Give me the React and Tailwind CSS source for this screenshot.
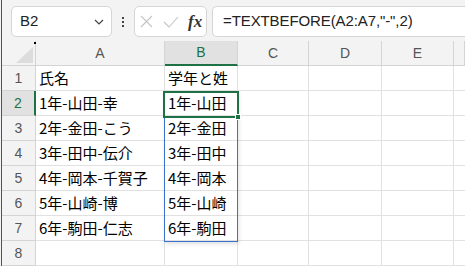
import React from "react";

const cols = ["A", "B", "C", "D", "E", ""];
const rows = [
  ["氏名", "学年と姓"],
  ["1年-山田-幸", "1年-山田"],
  ["2年-金田-こう", "2年-金田"],
  ["3年-田中-伝介", "3年-田中"],
  ["4年-岡本-千賀子", "4年-岡本"],
  ["5年-山崎-博", "5年-山崎"],
  ["6年-駒田-仁志", "6年-駒田"],
  ["", ""],
];

const jp = { fontFamily: '"Noto Sans CJK JP", "Noto Sans", sans-serif' };

function Toolbar() {
  return (
    <div className="h-[42px] flex items-start pt-[6px] bg-[#f3f3f3]">
      {/* name box */}
      <div className="ml-[9px] w-[101px] h-[31px] bg-white border border-[#d6d6d6] rounded-[5px] flex items-center pl-[8px] pr-[6px]">
        <span className="flex-1 text-[15px] text-[#222] font-['Liberation_Sans',sans-serif]">B2</span>
        <svg width="10" height="6" viewBox="0 0 10 6" className="mr-[1px]">
          <path d="M1 1 L5 5 L9 1" fill="none" stroke="#444" strokeWidth="1.2" />
        </svg>
      </div>
      {/* dots */}
      <div className="w-[22px] h-[31px] flex flex-col items-center justify-center gap-[2px]">
        <span className="w-[2px] h-[2px] bg-[#444]" />
        <span className="w-[2px] h-[2px] bg-[#444]" />
        <span className="w-[2px] h-[2px] bg-[#444]" />
      </div>
      {/* cancel / enter / fx */}
      <div className="w-[73px] h-[31px] bg-white border border-[#d6d6d6] rounded-[5px] flex items-center pl-[5px]">
        <svg width="13" height="13" viewBox="0 0 13 13">
          <path d="M1 1 L12 12 M12 1 L1 12" stroke="#c4c4c4" strokeWidth="1.1" />
        </svg>
        <svg width="16" height="12" viewBox="0 0 16 12" className="ml-[10px]">
          <path d="M1 6 L6 11 L15 1" fill="none" stroke="#c4c4c4" strokeWidth="1.1" />
        </svg>
        <span className="ml-[9px] text-[17px] italic font-bold text-[#333] font-['Liberation_Serif',serif] leading-none">
          fx
        </span>
      </div>
      {/* formula input */}
      <div className="ml-[5px] flex-1 h-[31px] bg-white border border-r-0 border-[#d6d6d6] rounded-l-[5px] flex items-center pl-[10px]">
        <span className="text-[15px] tracking-[-0.1px] text-[#222] font-['Liberation_Sans',sans-serif] whitespace-nowrap">
          =TEXTBEFORE(A2:A7,"-",2)
        </span>
      </div>
    </div>
  );
}

function Grid() {
  return (
    <div className="grid grid-cols-[34px_129px_73px_71px_73px_72px_1fr] auto-rows-[25px]">
      {/* corner */}
      <div className="relative bg-[#f3f3f3] border-r border-b border-[#d4d4d4]">
        <svg width="17" height="16" viewBox="0 0 17 16" className="absolute right-[2px] bottom-[2px]">
          <path d="M17 0 L17 16 L0 16 Z" fill="#dcdcdc" />
        </svg>
        <span className="absolute right-[-1px] top-[1px] w-[2px] h-[2px] bg-black" />
      </div>
      {cols.map((c, i) => (
        <div
          key={"h" + i}
          className={
            c === "B"
              ? "bg-[#e1e1e1] border-r border-[#d4d4d4] border-b-2 border-b-[#1e7145] text-[#1e7145] flex items-center justify-center text-[14px] font-['Liberation_Sans',sans-serif]"
              : "bg-[#f3f3f3] border-r border-b border-[#d4d4d4] text-[#555] flex items-center justify-center text-[14px] font-['Liberation_Sans',sans-serif]"
          }
        >
          {c}
        </div>
      ))}
      {rows.map((r, ri) => (
        <React.Fragment key={ri}>
          <div
            className={
              ri === 1
                ? "bg-[#e1e1e1] border-b border-[#d4d4d4] border-r-2 border-r-[#1e7145] text-[#1e7145] flex items-center justify-center text-[14px] font-['Liberation_Sans',sans-serif]"
                : "bg-[#f3f3f3] border-r border-b border-[#d4d4d4] text-[#555] flex items-center justify-center text-[14px] font-['Liberation_Sans',sans-serif]"
            }
          >
            {ri + 1}
          </div>
          <div className="bg-white border-r border-b border-[#e1e1e1] flex items-center pl-[3px] text-[15px] text-black whitespace-nowrap" style={jp}>
            {r[0]}
          </div>
          <div className="bg-white border-r border-b border-[#e1e1e1] flex items-center pl-[3px] text-[15px] text-black whitespace-nowrap" style={jp}>
            {r[1]}
          </div>
          <div className="bg-white border-r border-b border-[#e1e1e1]" />
          <div className="bg-white border-r border-b border-[#e1e1e1]" />
          <div className="bg-white border-r border-b border-[#e1e1e1]" />
          <div className="bg-white border-b border-[#e1e1e1]" />
        </React.Fragment>
      ))}
    </div>
  );
}

export default function App() {
  return (
    <div className="relative w-[465px] h-[266px] overflow-hidden flex bg-white">
      <div className="w-px bg-[#f3f3f3]" />
      <div className="w-px bg-[#1e7145]" />
      <div className="flex-1 flex flex-col">
        <Toolbar />
        <Grid />
      </div>

      {/* spill range outline */}
      <div className="absolute left-[164px] top-[91px] w-[74px] h-[151px] border border-[#3a73cf] shadow-[1px_2px_4px_rgba(0,0,0,0.12)] pointer-events-none" />
      {/* active cell */}
      <div className="absolute left-[163px] top-[91px] w-[76px] h-[27px] border-2 border-[#1e7145] pointer-events-none" />
      {/* fill handle */}
      <div className="absolute left-[235px] top-[114px] w-[6px] h-[6px] bg-[#1e7145] border border-white pointer-events-none" />
    </div>
  );
}
